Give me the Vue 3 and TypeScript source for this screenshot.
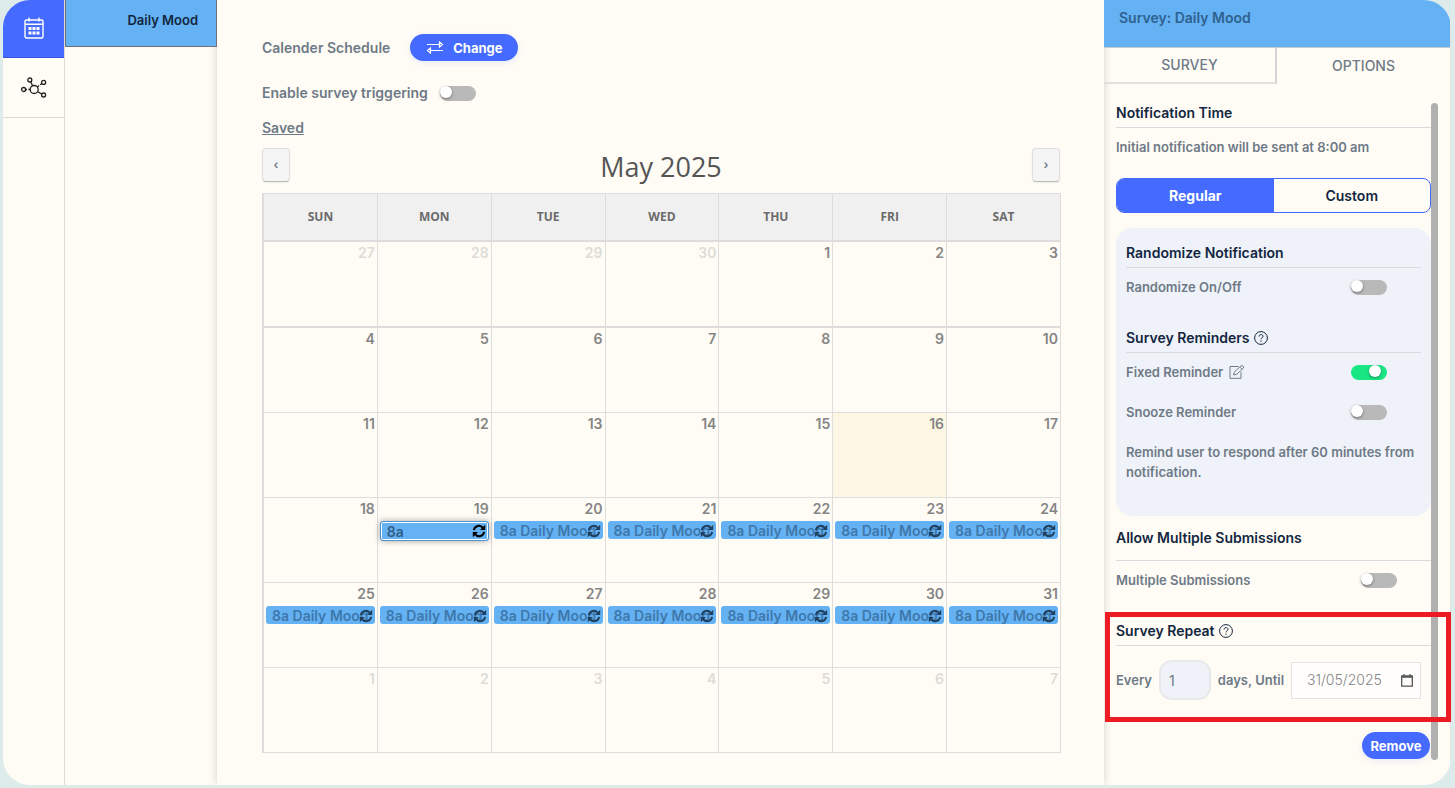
<script setup lang="ts">
import { ref } from 'vue'

interface Day {
  n: number
  out?: boolean
  today?: boolean
  event?: 'normal' | 'selected'
}

const weekdays = ['SUN', 'MON', 'TUE', 'WED', 'THU', 'FRI', 'SAT']

const weeks: Day[][] = []
for (let w = 0; w < 6; w++) {
  const row: Day[] = []
  for (let d = 0; d < 7; d++) {
    const offset = w * 7 + d - 3
    if (offset < 1) row.push({ n: offset + 30, out: true })
    else if (offset > 31) row.push({ n: offset - 31, out: true })
    else
      row.push({
        n: offset,
        today: offset === 16,
        event: offset === 19 ? 'selected' : offset > 19 ? 'normal' : undefined,
      })
  }
  weeks.push(row)
}

const triggering = ref(false)
const randomize = ref(false)
const fixedReminder = ref(true)
const snooze = ref(false)
const multiple = ref(false)
const mode = ref<'Regular' | 'Custom'>('Regular')
const every = ref(1)
const until = ref('31/05/2025')
</script>

<template>
  <div class="app">
    <nav class="rail" aria-label="Sections">
      <button class="rail-btn active" aria-label="Calendar">
        <svg width="20" height="22" viewBox="0 0 20 22" fill="none" stroke="#fff" stroke-width="1.4">
          <rect x="1" y="3" width="18" height="18" rx="1.5" />
          <path d="M1 7.2h18M5 0.5v4M15 0.5v4" />
          <g fill="#fff" stroke="none">
            <rect x="4.5" y="10" width="3" height="3" /><rect x="8.5" y="10" width="3" height="3" />
            <rect x="12.5" y="10" width="3" height="3" /><rect x="4.5" y="14.5" width="3" height="3" />
            <rect x="8.5" y="14.5" width="3" height="3" /><rect x="12.5" y="14.5" width="3" height="3" />
          </g>
        </svg>
      </button>
      <button class="rail-btn" aria-label="Triggers">
        <svg width="26" height="22" viewBox="0 0 26 22" fill="none" stroke="#222" stroke-width="1.3">
          <circle cx="13.2" cy="12.5" r="4" />
          <circle cx="2.6" cy="12.5" r="2" />
          <circle cx="8.8" cy="3" r="2" />
          <circle cx="22.6" cy="5.4" r="2" />
          <circle cx="22.6" cy="18" r="2" />
          <path d="M4.8 12.5h1.2M7.4 12.5h1.8M9.8 5l1.8 3.8M20.6 6.7l-1.6 1.1M18 8.6l-1.6 1.3M16.8 14.8l4 2.3" />
        </svg>
      </button>
    </nav>

    <aside class="list">
      <button class="list-item">Daily Mood</button>
    </aside>

    <main class="main">
      <div class="line schedule">
        <span>Calender Schedule</span>
        <button class="pill change">
          <svg width="18" height="13" viewBox="0 0 18 13" fill="none" stroke="#fff" stroke-width="1.2">
            <path d="M1 3.5h12.5M4.5 9.5H17M13.5 1v5l3-2.5zM4.5 7v5l-3-2.5z" />
          </svg>
          Change
        </button>
      </div>
      <label class="line trigger">
        <span>Enable survey triggering</span>
        <input v-model="triggering" class="toggle" type="checkbox" />
      </label>
      <div class="line saved"><a href="#saved">Saved</a></div>

      <div class="toolbar">
        <button class="step" aria-label="Previous month">‹</button>
        <h2>May 2025</h2>
        <button class="step" aria-label="Next month">›</button>
      </div>

      <table class="calendar">
        <thead>
          <tr>
            <th v-for="d in weekdays" :key="d" scope="col">{{ d }}</th>
          </tr>
        </thead>
        <tbody>
          <tr v-for="(week, i) in weeks" :key="i">
            <td v-for="(day, j) in week" :key="j" :class="{ out: day.out, today: day.today }">
              <div class="num">{{ day.n }}</div>
              <div v-if="day.event" class="event" :class="day.event">
                <span class="event-text">{{ day.event === 'selected' ? '8a' : '8a Daily Mood' }}</span>
                <svg class="sync" width="14" height="14" viewBox="0 0 14 14" fill="none" stroke="currentColor" stroke-width="2">
                  <path d="M1.9 6.2A5 5 0 0 1 11 4M12.1 7.8A5 5 0 0 1 3 10" />
                  <path d="M13.2 0.8v5.2H8zM0.8 13.2V8H6z" fill="currentColor" stroke="none" />
                </svg>
              </div>
            </td>
          </tr>
        </tbody>
      </table>
    </main>

    <aside class="panel">
      <header class="panel-head">Survey: Daily Mood</header>
      <div class="tabs" role="tablist">
        <button class="tab survey" role="tab">SURVEY</button>
        <button class="tab" role="tab" aria-selected="true">OPTIONS</button>
      </div>
      <div class="panel-body">
        <div class="content">
          <h3>Notification Time</h3>
          <p class="row">Initial notification will be sent at 8:00 am</p>

          <div class="segment">
            <button :class="{ on: mode === 'Regular' }" @click="mode = 'Regular'">Regular</button>
            <button :class="{ on: mode === 'Custom' }" @click="mode = 'Custom'">Custom</button>
          </div>

          <section class="card">
            <h3>Randomize Notification</h3>
            <label class="row">
              <span>Randomize On/Off</span>
              <input v-model="randomize" class="toggle" type="checkbox" />
            </label>
            <h3 class="next">
              Survey Reminders
              <svg width="14" height="14" viewBox="0 0 14 14" fill="none" stroke="currentColor" stroke-width="1">
                <circle cx="7" cy="7" r="6.4" />
                <path d="M5 5.6C5 2.9 9 3 9 5.4 9 6.8 7 6.8 7 8.4M7 9.6v1.2" />
              </svg>
            </h3>
            <label class="row">
              <span class="with-icon">
                Fixed Reminder
                <svg width="16" height="14" viewBox="0 0 16 14" fill="none" stroke="currentColor" stroke-width="1">
                  <path d="M9.5 1.5H1v11.8h11V7" />
                  <path d="M4.5 10l1-3.2 6.6-6c1-0.8 3.2 0.8 2.4 2.2l-6.6 6.2zM11 2.2l2.2 2.2" />
                </svg>
              </span>
              <input v-model="fixedReminder" class="toggle" type="checkbox" />
            </label>
            <label class="row spaced">
              <span>Snooze Reminder</span>
              <input v-model="snooze" class="toggle" type="checkbox" />
            </label>
            <p class="row spaced">Remind user to respond after 60 minutes from notification.</p>
          </section>

          <h3 class="allow">Allow Multiple Submissions</h3>
          <label class="row">
            <span>Multiple Submissions</span>
            <input v-model="multiple" class="toggle" type="checkbox" />
          </label>

          <section class="repeat">
            <h3 class="next">
              Survey Repeat
              <svg width="14" height="14" viewBox="0 0 14 14" fill="none" stroke="currentColor" stroke-width="1">
                <circle cx="7" cy="7" r="6.4" />
                <path d="M5 5.6C5 2.9 9 3 9 5.4 9 6.8 7 6.8 7 8.4M7 9.6v1.2" />
              </svg>
            </h3>
            <div class="repeat-row">
              <label for="every">Every</label>
              <input id="every" v-model="every" class="every" type="number" min="1" />
              <label for="until">days, Until</label>
              <div class="date">
                <input id="until" v-model="until" type="text" />
                <button aria-label="Pick a date">
                  <svg width="12" height="13" viewBox="0 0 12 13" fill="none" stroke="#555" stroke-width="1.3">
                    <path d="M0.7 2h10.6v10.2H0.7z" />
                    <path d="M0.7 2.8h10.6" stroke-width="1.8" />
                    <path d="M3 0v2M9 0v2" />
                  </svg>
                </button>
              </div>
            </div>
          </section>

          <button class="pill remove">Remove</button>
        </div>
        <div class="thumb"></div>
      </div>
    </aside>
  </div>
</template>

<style>
body {
  margin: 0;
  background: #deebeb;
}
</style>

<style scoped>
.app,
.app * {
  box-sizing: border-box;
}
.app {
  display: flex;
  min-height: calc(100vh - 3px);
  margin: 0 4px 3px 3px;
  border-radius: 27px;
  overflow: hidden;
  background: #fffcf5;
  color: #6e7a87;
  font: 600 14px/20px Inter, 'Liberation Sans', sans-serif;
}
button,
input {
  font: inherit;
  color: inherit;
  margin: 0;
}
button {
  border: 0;
  padding: 0;
  background: none;
  cursor: pointer;
}
h2,
h3,
p {
  margin: 0;
}
svg {
  flex: none;
}

.rail {
  flex: 0 0 62px;
  border-right: 1px solid #dedbd5;
}
.rail-btn {
  display: flex;
  align-items: center;
  justify-content: center;
  width: 100%;
  height: 60px;
  border-bottom: 1px solid #dedbd5;
}
.rail-btn.active {
  height: 58px;
  padding-bottom: 2px;
  background: #446aff;
  border-bottom-color: #3558d8;
}

.list {
  flex: 0 0 152px;
}
.list-item {
  position: relative;
  z-index: 1;
  width: 100%;
  height: 47px;
  padding: 0 18px 6px;
  border: 1px solid #6d7278;
  border-top: 0;
  background: #64b2f4;
  color: #12263f;
  font-size: 13px;
  text-align: right;
}

.main {
  flex: 1;
  min-width: 0;
  padding: 34px 43px 32px 45px;
  box-shadow: 0 0 8px rgba(0, 0, 0, 0.18);
}
.line {
  display: flex;
  align-items: center;
}
.schedule {
  gap: 20px;
}
.pill {
  display: flex;
  align-items: center;
  justify-content: center;
  height: 27px;
  border-radius: 14px;
  background: #446aff;
  color: #fff;
  font-weight: 700;
  font-size: 13px;
  box-shadow: 0 2px 6px rgba(68, 106, 255, 0.12);
}
.change {
  gap: 9px;
  width: 108px;
}
.trigger {
  width: fit-content;
  gap: 12px;
  margin-top: 22px;
}
.saved {
  margin-top: 15px;
}
.saved a {
  color: inherit;
}
.toolbar {
  display: flex;
  justify-content: space-between;
  align-items: center;
  margin-top: 10px;
  padding-right: 1px;
}
.toolbar h2 {
  color: #555;
  font: 400 27px/34px 'Open Sans', sans-serif;
  padding-top: 4px;
  height: 34px;
  display: flex;
  align-items: center;
}
.step {
  width: 28px;
  height: 34px;
  border: 1px solid #ddd;
  border-bottom-color: #bbb;
  border-radius: 4px;
  background: #f5f5f5;
  box-shadow: 0 1px 2px rgba(0, 0, 0, 0.06);
  font-size: 12px;
}

.calendar {
  width: 100%;
  margin-top: 11px;
  table-layout: fixed;
  border-collapse: separate;
  border-spacing: 0;
  border: 1px solid #ddd;
  border-width: 1px 0 0 2px;
}
.calendar th {
  height: 48px;
  padding: 0;
  border: 1px solid #ddd;
  border-width: 0 1px 2px 0;
  background: #f0f0f0;
  color: #6b6b6b;
  font: 700 12px/20px 'Open Sans', sans-serif;
}
.calendar td {
  height: 85px;
  padding: 1px 2px 0;
  vertical-align: top;
  border: 1px solid #ddd;
  border-width: 0 1px 1px 0;
  color: #858585;
}
.calendar tbody tr:first-child td {
  height: 86px;
  border-bottom-width: 2px;
}
.calendar td.out {
  color: #dddcd7;
}
.calendar td.today {
  background: #fcf6e2;
}
.num {
  text-align: right;
}
.event {
  position: relative;
  display: flex;
  align-items: center;
  height: 18px;
  margin-top: 2px;
  padding: 2px 0 0 6px;
  border-radius: 3px;
  background: #64b2f4;
  color: #3f78ab;
}
.event-text {
  flex: 1;
  min-width: 0;
  white-space: nowrap;
}
.sync {
  position: absolute;
  right: 2px;
  top: 3px;
  color: #20405f;
}
.event.selected {
  height: 20px;
  color: #325f88;
  border: 1px solid #4b93d3;
  box-shadow: inset 0 0 0 1px #fff, 0 0 6px rgba(0, 0, 0, 0.35);
}
.event.selected .sync {
  top: 2px;
  color: #000;
}

.toggle {
  appearance: none;
  flex: none;
  width: 36px;
  height: 15px;
  border-radius: 8px;
  background: #b9b9b9;
  cursor: pointer;
}
.toggle::before {
  content: '';
  display: block;
  width: 12px;
  height: 12px;
  border-radius: 50%;
  background: #fff;
  box-shadow: 0 1px 3px rgba(0, 0, 0, 0.4);
}
.toggle:checked {
  background: #19e783;
}
.toggle:checked::before {
  margin-left: 18px;
}

.panel {
  flex: 0 0 347px;
  display: flex;
  flex-direction: column;
  border-right: 1px solid #e3e3df;
}
.panel-head {
  position: relative;
  height: 48px;
  padding: 8px 15px;
  border-bottom: 1px solid #c9ccd0;
  background: #64b2f4;
  color: #2f618f;
}
.tabs {
  display: grid;
  grid-template-columns: 1fr 1fr;
}
.tab {
  height: 36px;
  font-weight: 500;
}
.tab.survey {
  border: 2px solid #d3d3d3;
  border-width: 0 2px 2px 0;
  border-bottom-color: #dfdfdc;
}
.panel-body {
  display: flex;
  flex: 1;
  align-items: stretch;
  padding: 19px 12px 25px;
}
.content {
  flex: 1;
  min-width: 0;
  font-size: 13px;
}
.thumb {
  flex: 0 0 7px;
  border-radius: 4px;
  background: #b0b0b0;
}
h3 {
  display: flex;
  align-items: center;
  gap: 4px;
  padding-bottom: 4px;
  border-bottom: 1px solid #d9dadb;
  color: #12263f;
  font-size: 14px;
  font-weight: 600;
}
h3.next {
  margin-top: 31px;
}
h3.allow {
  margin-top: 12px;
  padding-bottom: 12px;
}
.row {
  display: flex;
  justify-content: space-between;
  align-items: center;
  margin-top: 9px;
}
label.row {
  padding-right: 34px;
}
.row.spaced {
  margin-top: 20px;
}
.with-icon {
  display: flex;
  align-items: center;
  gap: 6px;
}
.segment {
  display: grid;
  grid-template-columns: 1fr 1fr;
  height: 35px;
  margin-top: 21px;
  border: 1px solid #446aff;
  border-radius: 8px;
  overflow: hidden;
  color: #12263f;
  font-size: 14px;
}
.segment .on {
  background: #446aff;
  color: #fff;
  font-weight: 700;
}
.card {
  margin-top: 15px;
  padding: 15px 10px 34px;
  border-radius: 16px;
  background: #eff3f9;
}
.repeat {
  position: relative;
}
.repeat::after {
  content: '';
  position: absolute;
  inset: -9px -20px -22px -11px;
  border: 5px solid #ed1c24;
  pointer-events: none;
}
.repeat-row {
  display: flex;
  align-items: center;
  justify-content: space-between;
  margin-top: 14px;
  padding-right: 10px;
}
.every {
  width: 52px;
  height: 40px;
  padding: 0 8px;
  border: 2px solid #e6e8ea;
  border-radius: 13px;
  background: #eff3f9;
  font-size: 14px;
  font-weight: 400;
}
.date {
  display: flex;
  align-items: center;
  width: 130px;
  height: 37px;
  padding: 0 7px 0 15px;
  border: 1px solid #e3e3e3;
  background: #fffefc;
  color: #858585;
}
.date input {
  flex: 1;
  min-width: 0;
  padding: 0;
  border: 0;
  background: none;
  font-size: 14px;
  font-weight: 300;
}
.date button {
  display: flex;
}
.remove {
  width: 68px;
  margin: 32px 1px 0 auto;
}
</style>
